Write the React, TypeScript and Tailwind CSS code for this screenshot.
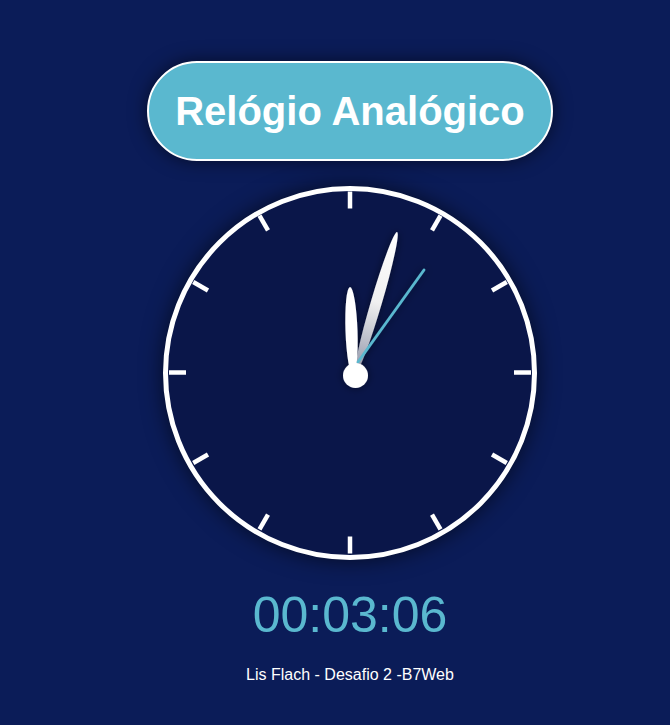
import React from "react";

const ticks = Array.from({ length: 12 }, (_, i) => i * 30);

export default function App() {
  return (
    <div
      className="min-h-[725px] w-full bg-[#0b1c58] pl-[30px] flex flex-col items-center"
      style={{ fontFamily: '"Liberation Sans", Arial, sans-serif' }}
    >
      <div className="mt-[61px] w-[406px] rounded-full border-2 border-white bg-[#5ab8cf] py-[25px] text-center text-[40px] leading-[46px] font-bold text-white shadow-[0_0_18px_rgba(0,0,0,0.55)]">
        Relógio Analógico
      </div>

      <div className="relative mt-[25px] h-[374px] w-[374px] rounded-full border-[5px] border-white bg-[#0a1649] shadow-[0_0_22px_rgba(0,0,0,0.6)]">
        <svg
          className="absolute left-[-5px] top-[-5px]"
          width={374}
          height={374}
          viewBox="0 0 374 374"
        >
          <defs>
            <linearGradient id="mg" x1="0" y1="0" x2="0" y2="1">
              <stop offset="0" stopColor="#ffffff" />
              <stop offset="0.5" stopColor="#f0f0f0" />
              <stop offset="1" stopColor="#8f94a8" />
            </linearGradient>
            <filter id="sh" x="-50%" y="-20%" width="200%" height="140%">
              <feDropShadow dx="0" dy="0" stdDeviation="4" floodColor="#000" floodOpacity="0.5" />
            </filter>
          </defs>
          {ticks.map((a) => (
            <line
              key={a}
              x1={187}
              y1={186.5 - 164}
              x2={187}
              y2={186.5 - 181}
              stroke="#fff"
              strokeWidth={4.5}
              transform={`rotate(${a} 187 186.5)`}
            />
          ))}
          <g filter="url(#sh)">
            <g transform="translate(213.5 116) rotate(16.4)">
              <ellipse cx={0} cy={0} rx={5.5} ry={73} fill="url(#mg)" />
            </g>
            <g transform="translate(188.5 145) rotate(-2)">
              <ellipse cx={0} cy={0} rx={6} ry={44} fill="#ffffff" />
            </g>
            <line
              x1={195}
              y1={176}
              x2={261}
              y2={84}
              stroke="#5ab8cf"
              strokeWidth={2.8}
              strokeLinecap="round"
            />
            <circle cx={192.5} cy={189.5} r={12.5} fill="#ffffff" />
          </g>
        </svg>
      </div>

      <div className="mt-[27px] text-[50px] leading-[57px] text-[#5ab8cf]">
        00:03:06
      </div>

      <div className="mt-[22px] text-[16px] leading-[18px] text-white">
        Lis Flach - Desafio 2 -B7Web
      </div>
    </div>
  );
}
